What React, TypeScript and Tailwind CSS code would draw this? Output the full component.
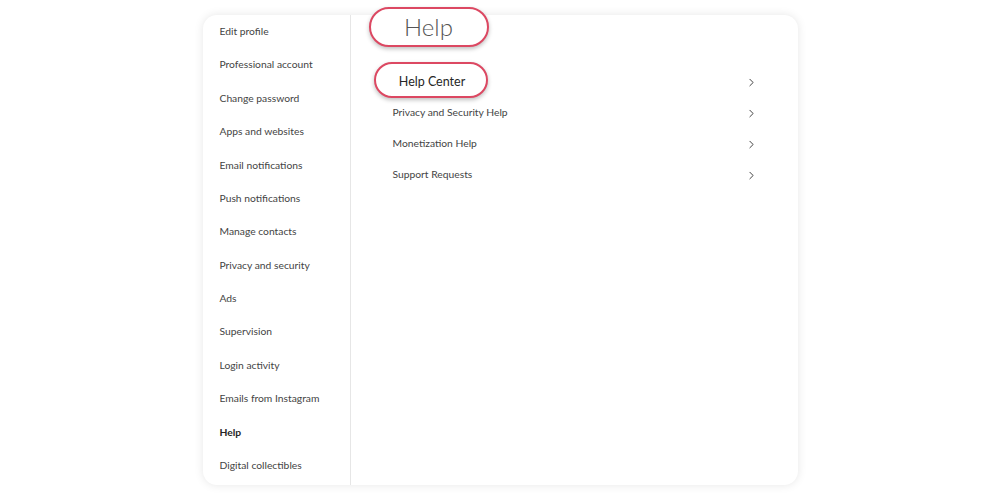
import { ChevronRight } from "lucide-react";

const menu = [
  "Edit profile",
  "Professional account",
  "Change password",
  "Apps and websites",
  "Email notifications",
  "Push notifications",
  "Manage contacts",
  "Privacy and security",
  "Ads",
  "Supervision",
  "Login activity",
  "Emails from Instagram",
  "Help",
  "Digital collectibles",
];

const rows = ["Privacy and Security Help", "Monetization Help", "Support Requests"];

export default function App() {
  return (
    <div className="h-[500px] w-[1000px] bg-white pt-[15px] font-['Lato',sans-serif]">
      <div className="mx-auto flex h-[470px] w-[595px] rounded-[14px] bg-white shadow-[0_0_10px_rgba(0,0,0,0.1)]">
        <nav className="w-[148px] shrink-0 border-r border-[#e6e6e6]">
          {menu.map((item) => (
            <div
              key={item}
              className={`flex h-[33.4px] items-center pl-[17px] text-[10.3px] ${item === "Help" ? "font-bold text-[#262626]" : "text-[#444]"}`}
            >
              {item}
            </div>
          ))}
        </nav>
        <section className="flex-1 pr-[40px]">
          <div className="-mt-[8px] ml-[18px] flex h-[40px] w-[120px] items-center justify-center rounded-full border-[2.5px] border-[#dc4862] bg-white shadow-[0_2px_4px_rgba(0,0,0,0.25)]">
            <span className="text-[24px] font-light text-[#555]">Help</span>
          </div>
          <div className="mt-[19.5px]">
            <div className="flex h-[31px] items-center justify-between">
              <div className="-mt-[4px] ml-[23px] flex h-[36px] w-[114px] shrink-0 items-center justify-center rounded-full border-[2.5px] border-[#dc4862] bg-white shadow-[0_2px_4px_rgba(0,0,0,0.25)]">
                <span className="mt-[4px] pl-[3px] text-[12.5px] text-[#262626]">Help Center</span>
              </div>
              <ChevronRight className="h-[13px] w-[13px] text-[#333]" strokeWidth={1.7} />
            </div>
            {rows.map((row) => (
              <div key={row} className="flex h-[31px] items-center justify-between">
                <span className="ml-[42px] text-[10.3px] text-[#444]">{row}</span>
                <ChevronRight className="h-[13px] w-[13px] text-[#333]" strokeWidth={1.7} />
              </div>
            ))}
          </div>
        </section>
      </div>
    </div>
  );
}
